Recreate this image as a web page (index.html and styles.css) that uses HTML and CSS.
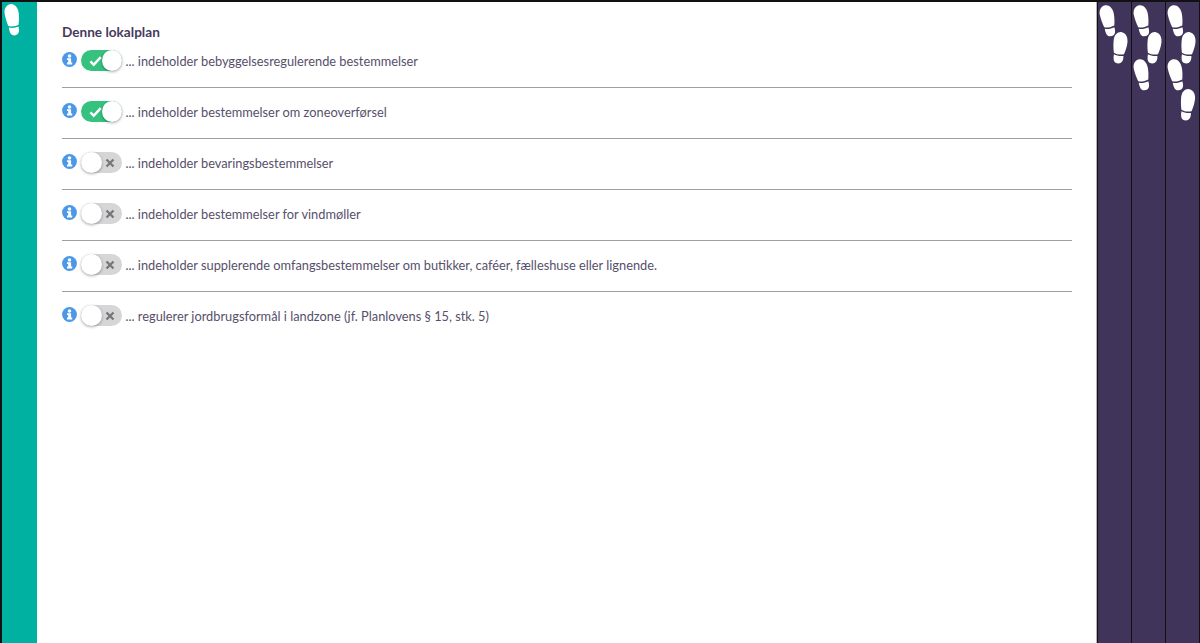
FILE: index.html
```html
<!DOCTYPE html>
<html>
<head>
    <meta charset="utf-8">
    <title>Denne lokalplan</title>
    <link rel="stylesheet" href="styles.css">
</head>
<body>
    <svg class="defs" width="0" height="0">
        <defs>
            <g id="foot-shape">
                <path d="M0 8C-0.200 3.500 2.600 -0.500 6.800 -0.500C11 -0.500 13.800 3.500 14 9C14.100 13.500 13.300 17.500 12.400 21C9.200 22.200 5 22.200 2.200 21C1 17 0.200 12.500 0 8Z"/>
                <path d="M2.500 22.600C5.300 23.700 9.200 23.700 12.100 22.700C12.500 25 12.400 27 11.700 28.500C10.300 31.900 4.700 31.900 3.300 28.500C2.800 27 2.400 25 2.500 22.600Z"/>
            </g>
            <g id="foot-left"><use href="#foot-shape" transform="rotate(-10) translate(-7 -15.500)"/></g>
            <g id="foot-right"><use href="#foot-shape" transform="rotate(9) translate(-7 -15.500)"/></g>
            <symbol id="info" viewBox="0 0 16 16">
                <circle cx="8" cy="8" r="7.900" fill="#4a98e6"/>
                <circle cx="8" cy="4.200" r="1.900" fill="#fff"/>
                <path d="M5.300 6.600H9.700V11.200H10.900V13.300H5.300V11.200H6.600V8.600H5.300Z" fill="#fff"/>
            </symbol>
        </defs>
    </svg>

    <div class="frame">
        <div class="stage stage-current">
            <svg class="steps" width="35" height="125"><use href="#foot-left" transform="translate(10.500 18) rotate(3)"/></svg>
        </div>

        <div class="main">
            <h1 class="title">Denne lokalplan</h1>

            <div class="row">
                <svg class="info"><use href="#info"/></svg>
                <span class="toggle on">
                    <svg class="mark" width="14" height="12" viewBox="0 0 14 12"><path d="M1.500 6.500L5 10L12.500 2"/></svg>
                    <span class="knob"></span>
                </span>
                <span class="label">... indeholder bebyggelsesregulerende bestemmelser</span>
            </div>
            <div class="row">
                <svg class="info"><use href="#info"/></svg>
                <span class="toggle on">
                    <svg class="mark" width="14" height="12" viewBox="0 0 14 12"><path d="M1.500 6.500L5 10L12.500 2"/></svg>
                    <span class="knob"></span>
                </span>
                <span class="label">... indeholder bestemmelser om zoneoverførsel</span>
            </div>
            <div class="row">
                <svg class="info"><use href="#info"/></svg>
                <span class="toggle">
                    <span class="knob"></span>
                    <svg class="mark" width="10" height="10" viewBox="0 0 10 10"><path d="M1.500 1.500L8.500 8.500M8.500 1.500L1.500 8.500"/></svg>
                </span>
                <span class="label">... indeholder bevaringsbestemmelser</span>
            </div>
            <div class="row">
                <svg class="info"><use href="#info"/></svg>
                <span class="toggle">
                    <span class="knob"></span>
                    <svg class="mark" width="10" height="10" viewBox="0 0 10 10"><path d="M1.500 1.500L8.500 8.500M8.500 1.500L1.500 8.500"/></svg>
                </span>
                <span class="label">... indeholder bestemmelser for vindmøller</span>
            </div>
            <div class="row">
                <svg class="info"><use href="#info"/></svg>
                <span class="toggle">
                    <span class="knob"></span>
                    <svg class="mark" width="10" height="10" viewBox="0 0 10 10"><path d="M1.500 1.500L8.500 8.500M8.500 1.500L1.500 8.500"/></svg>
                </span>
                <span class="label">... indeholder supplerende omfangsbestemmelser om butikker, caféer, fælleshuse eller lignende.</span>
            </div>
            <div class="row">
                <svg class="info"><use href="#info"/></svg>
                <span class="toggle">
                    <span class="knob"></span>
                    <svg class="mark" width="10" height="10" viewBox="0 0 10 10"><path d="M1.500 1.500L8.500 8.500M8.500 1.500L1.500 8.500"/></svg>
                </span>
                <span class="label">... regulerer jordbrugsformål i landzone (jf. Planlovens § 15, stk. 5)</span>
            </div>
        </div>

        <div class="stage">
            <svg class="steps" width="33" height="125">
                <use href="#foot-left" transform="translate(10 19)"/>
                <use href="#foot-right" transform="translate(21.500 46)"/>
            </svg>
        </div>
        <div class="stage">
            <svg class="steps" width="33" height="125">
                <use href="#foot-left" transform="translate(10 19)"/>
                <use href="#foot-right" transform="translate(21.500 46)"/>
                <use href="#foot-left" transform="translate(10 73)"/>
            </svg>
        </div>
        <div class="stage">
            <svg class="steps" width="33" height="125">
                <use href="#foot-left" transform="translate(10 19)"/>
                <use href="#foot-right" transform="translate(21.500 46)"/>
                <use href="#foot-left" transform="translate(10 73)"/>
                <use href="#foot-right" transform="translate(21 103)"/>
            </svg>
        </div>
    </div>
</body>
</html>
```

FILE: styles.css
```css
html, body { margin: 0; padding: 0; height: 100%; background: #fff; overflow: hidden; }
body { font-family: "Lato", "Open Sans", sans-serif; font-size: 12.8px; color: #57506b; }
.defs { position: absolute; }

.frame { display: flex; height: 641px; border-top: 2px solid #111; border-left: 2px solid #111; border-right: 1px solid #111; }

.stage { flex: 0 0 33px; background: #41345a; border-left: 1px solid #111; }
.stage-current { flex: 0 0 35px; background: #00b0a0; border-left: 0; }
.steps { display: block; fill: #fff; }

.main { flex: 1; padding: 22px 24px 0 25px; background: #fff; border-right: 1px solid #b5b5b5; }
.title { margin: 0 0 -3px; font-size: 13.6px; line-height: 16px; font-weight: 700; color: #463a5e; }

.row { display: flex; align-items: center; height: 48px; padding-bottom: 2px; border-bottom: 1px solid #a0a0a0; }
.row:last-child { border-bottom: 0; }

.info { width: 15px; height: 15px; margin: 0 4px 3px 0; }
.label { margin-left: 3.5px; line-height: 18px; }

.toggle { display: flex; align-items: center; justify-content: space-between; width: 41px; height: 21px; margin-bottom: 1px; border-radius: 11px; background: #d6d6d6; }
.toggle.on { background: #35c27f; }
.knob { width: 21px; height: 21px; border-radius: 50%; background: #fff; box-shadow: 0 1px 3px rgba(0, 0, 0, .35); }
.mark { fill: none; stroke: #77757c; stroke-width: 2.3; margin-right: 7px; }
.on .mark { stroke: #fff; stroke-width: 2.7; margin: 0 0 0 8px; }
```
